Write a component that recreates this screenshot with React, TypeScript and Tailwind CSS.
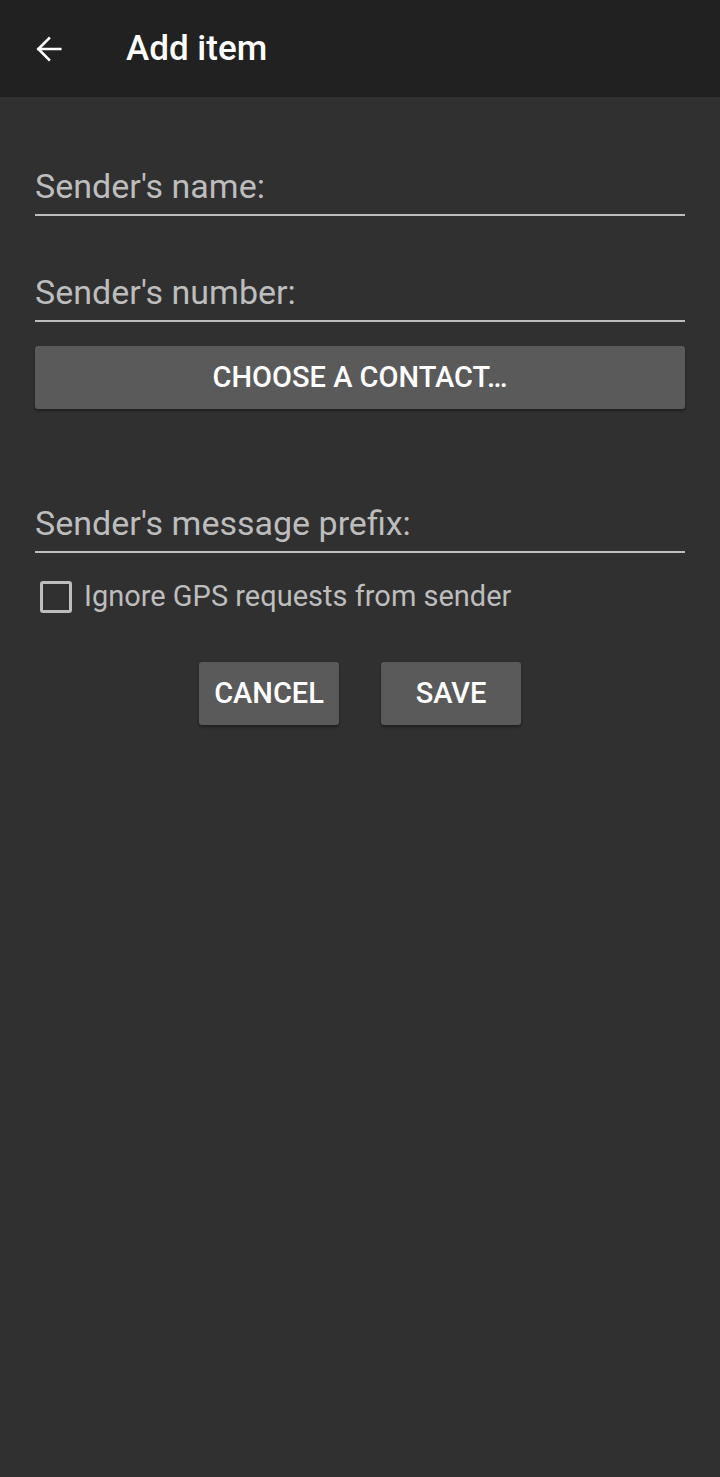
import { useState } from 'react';

const font = { fontFamily: 'Roboto, "Noto Sans", sans-serif' };

function Field({ label }: { label: string }) {
  const [value, setValue] = useState('');
  return (
    <input
      value={value}
      onChange={(e) => setValue(e.target.value)}
      placeholder={label}
      className="block h-[62px] w-full border-b-2 border-[#bdbdbd] bg-transparent pt-1 text-[34px] text-white outline-none placeholder:text-[#bdbdbd]"
    />
  );
}

const buttonClass =
  'flex h-[63px] items-center justify-center rounded-[3px] bg-[#5a5a5b] text-[29px] font-medium text-white shadow-[0_2px_3px_rgba(0,0,0,0.35)]';

export default function App() {
  const [ignoreGps, setIgnoreGps] = useState(false);

  return (
    <div className="flex min-h-[1477px] flex-col bg-[#303030]" style={font}>
      <header className="flex h-[97px] items-center bg-[#212121] px-[34px]">
        <button type="button" className="flex h-[30px] w-[30px] items-center justify-center text-white">
          <svg width="30" height="30" viewBox="0 0 24 24" fill="none" stroke="currentColor" strokeWidth="2.1" strokeLinecap="square">
            <path d="M21 12H3.5M12 3.5 3.5 12l8.5 8.5" />
          </svg>
        </button>
        <h1 className="ml-[62px] pt-[2px] text-[35px] font-medium text-white">Add item</h1>
      </header>

      <main className="px-[35px] pt-[57px]">
        <Field label="Sender's name:" />
        <div className="mt-[44px]">
          <Field label="Sender's number:" />
        </div>
        <button type="button" className={`${buttonClass} mt-[24px] w-full`}>
          CHOOSE A CONTACT…
        </button>

        <div className="mt-[82px]">
          <Field label="Sender's message prefix:" />
        </div>

        <label className="mt-[28px] flex h-[32px] items-center gap-[12px] pl-[5px] text-[29px] text-[#bdbdbd]">
          <span className="flex h-[32px] w-[32px] shrink-0 items-center justify-center rounded-[3px] border-[3px] border-[#bdbdbd]">
            <input
              type="checkbox"
              className="sr-only"
              checked={ignoreGps}
              onChange={(e) => setIgnoreGps(e.target.checked)}
            />
            {ignoreGps ? (
              <svg width="22" height="22" viewBox="0 0 24 24" fill="none" stroke="#bdbdbd" strokeWidth="3">
                <path d="M4 12l5 5L20 6" />
              </svg>
            ) : null}
          </span>
          Ignore GPS requests from sender
        </label>

        <div className="mt-[49px] flex justify-center gap-[42px]">
          <button type="button" className={`${buttonClass} w-[140px]`}>
            CANCEL
          </button>
          <button type="button" className={`${buttonClass} w-[140px]`}>
            SAVE
          </button>
        </div>
      </main>
    </div>
  );
}
